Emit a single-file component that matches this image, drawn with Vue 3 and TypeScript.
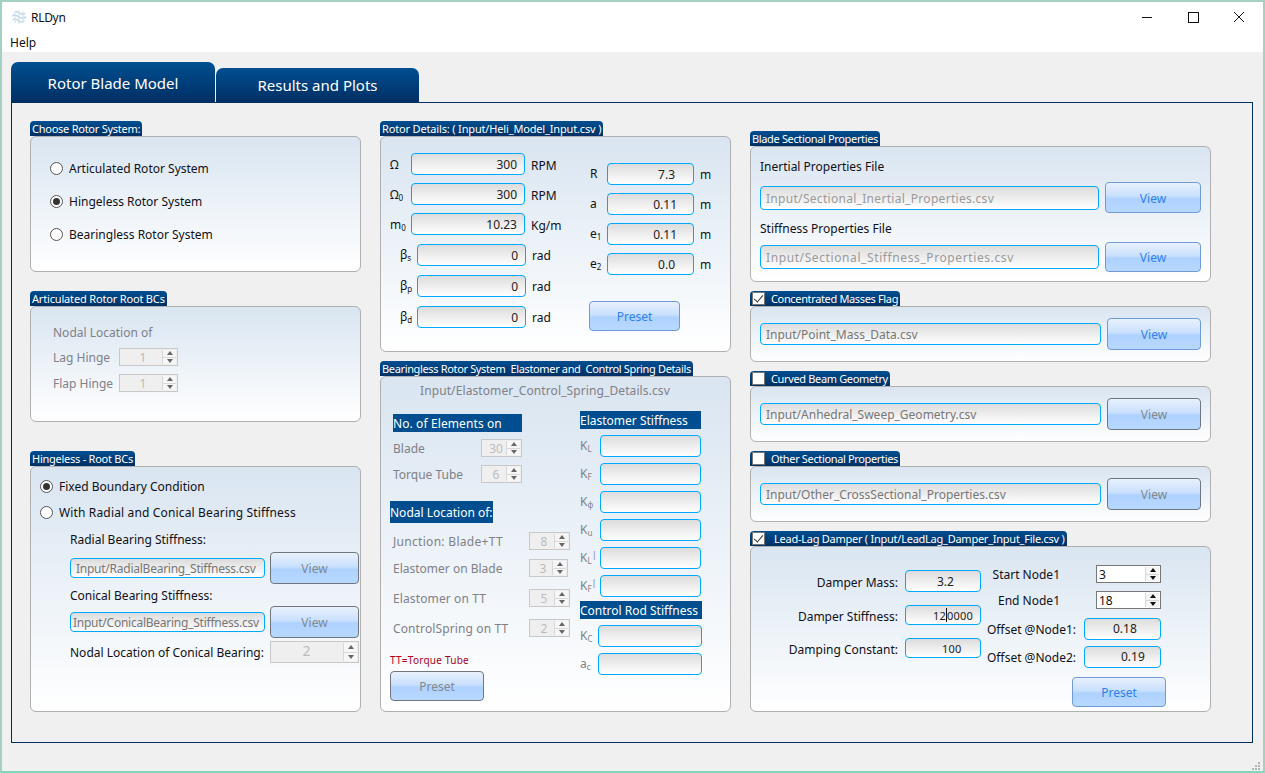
<script setup lang="ts">
const rotorSystems = ['Articulated Rotor System', 'Hingeless Rotor System', 'Bearingless Rotor System']
const rpmRows = [
  { label: 'Ω', sub: '', value: '300', unit: 'RPM' },
  { label: 'Ω', sub: '0', value: '300', unit: 'RPM' },
  { label: 'm', sub: '0', value: '10.23', unit: 'Kg/m' },
]
const betaRows = [
  { sub: 's', value: '0' },
  { sub: 'p', value: '0' },
  { sub: 'd', value: '0' },
]
const lengthRows = [
  { label: 'R', sub: '', value: '7.3', cls: 'pad-a' },
  { label: 'a', sub: '', value: '0.11', cls: 'pad-b' },
  { label: 'e', sub: '1', value: '0.11', cls: 'pad-b' },
  { label: 'e', sub: '2', value: '0.0', cls: 'pad-a' },
]
const nodalRows = [
  { label: 'Junction: Blade+TT', value: '8', cls: 'nodal-a' },
  { label: 'Elastomer on Blade', value: '3', cls: 'nodal-b' },
  { label: 'Elastomer on TT', value: '5', cls: 'nodal-c' },
  { label: 'ControlSpring on TT', value: '2', cls: 'nodal-c' },
]
const kRows = [
  { sub: 'L', sup: '' },
  { sub: 'F', sup: '' },
  { sub: 'ϕ', sup: '' },
  { sub: 'u', sup: '' },
  { sub: 'L', sup: '|' },
  { sub: 'F', sup: '|' },
]
</script>

<template>
  <div class="window">
    <header class="titlebar">
      <div class="title-left">
        <svg class="app-icon" viewBox="0 0 16 16" width="16" height="16">
          <defs>
            <clipPath id="globe"><circle cx="8" cy="8" r="7" /></clipPath>
          </defs>
          <g clip-path="url(#globe)" fill="none" stroke="#b5d0e8" stroke-width="1.3">
            <path d="M0 4c3-3 5-2 8 0s5 2 8-1M0 8c3-3 5-2 8 0s5 2 8-1M0 12c3-3 5-2 8 0s5 2 8-1" />
            <path d="M4 0c-1 5 1 10 0 16M8 0c1 5-1 10 0 16M12 0c-1 5 1 10 0 16" stroke="#d4e2ef" />
          </g>
        </svg>
        <span>RLDyn</span>
      </div>
      <div class="win-controls">
        <svg viewBox="0 0 46 30" width="46" height="30"><path d="M18 15.5h10" stroke="#111" fill="none" /></svg>
        <svg viewBox="0 0 46 30" width="46" height="30"><rect x="18.5" y="10.5" width="10" height="10" stroke="#111" fill="none" /></svg>
        <svg viewBox="0 0 46 30" width="46" height="30"><path d="M18 10l10 10M28 10l-10 10" stroke="#111" fill="none" /></svg>
      </div>
    </header>
    <nav class="menubar">Help</nav>

    <main class="content">
      <div class="tabs">
        <div class="tab active">Rotor Blade Model</div>
        <div class="tab">Results and Plots</div>
      </div>

      <div class="pane">
        <!-- left column -->
        <section class="col col-1">
          <div class="panel">
            <div class="tag">Choose Rotor System:</div>
            <div class="box h-136 rotor-choice">
              <label v-for="(r, i) in rotorSystems" :key="r" class="radio-row">
                <span class="radio" :class="{ on: i === 1 }"></span>{{ r }}
              </label>
            </div>
          </div>

          <div class="panel">
            <div class="tag loose">Articulated Rotor Root BCs</div>
            <div class="box h-116 artic">
              <div class="line dim nodal-title">Nodal Location of</div>
              <div class="artic-row">
                <span class="dim">Lag Hinge</span>
                <div class="spin disabled w-59"><span class="spin-val">1</span><span class="arrows"><i class="up"></i><i class="down"></i></span></div>
              </div>
              <div class="artic-row">
                <span class="dim">Flap Hinge</span>
                <div class="spin disabled w-59"><span class="spin-val">1</span><span class="arrows"><i class="up"></i><i class="down"></i></span></div>
              </div>
            </div>
          </div>

          <div class="panel low">
            <div class="tag">Hingeless - Root BCs</div>
            <div class="box h-246 hingeless">
              <label class="radio-row"><span class="radio on"></span>Fixed Boundary Condition</label>
              <label class="radio-row wide-text"><span class="radio"></span>With Radial and Conical Bearing Stiffness</label>
              <div class="indent">
                <div class="line bearing-label">Radial Bearing Stiffness:</div>
                <div class="file-row">
                  <div class="field file f-195 grey-text">Input/RadialBearing_Stiffness.csv</div>
                  <div class="btn disabled w-89">View</div>
                </div>
                <div class="line bearing-label second">Conical Bearing Stiffness:</div>
                <div class="file-row">
                  <div class="field file f-195 tight grey-text">Input/ConicalBearing_Stiffness.csv</div>
                  <div class="btn disabled w-89">View</div>
                </div>
                <div class="conical-row">
                  <span>Nodal Location of Conical Bearing:</span>
                  <div class="spin disabled w-89 tall"><span class="spin-val big">2</span><span class="arrows"><i class="up"></i><i class="down"></i></span></div>
                </div>
              </div>
            </div>
          </div>
        </section>

        <!-- middle column -->
        <section class="col col-2">
          <div class="panel">
            <div class="tag wide-tag">Rotor Details: ( Input/Heli_Model_Input.csv )</div>
            <div class="box h-216 details">
              <div class="details-left">
                <div v-for="r in rpmRows" :key="r.label + r.sub" class="detail-row rpm">
                  <span class="sym w-21">{{ r.label }}<sub>{{ r.sub }}</sub></span>
                  <div class="field value w-114">{{ r.value }}</div>
                  <span class="unit">{{ r.unit }}</span>
                </div>
                <div class="beta-list">
                  <div v-for="r in betaRows" :key="r.sub" class="detail-row">
                    <span class="sym beta">β<sub>{{ r.sub }}</sub></span>
                    <div class="field value w-109">{{ r.value }}</div>
                    <span class="unit">rad</span>
                  </div>
                </div>
              </div>
              <div class="details-right">
                <div v-for="r in lengthRows" :key="r.label + r.sub" class="detail-row">
                  <span class="sym w-17">{{ r.label }}<sub>{{ r.sub }}</sub></span>
                  <div class="field value w-87" :class="r.cls">{{ r.value }}</div>
                  <span class="unit">m</span>
                </div>
                <div class="btn preset-details">Preset</div>
              </div>
            </div>
          </div>

          <div class="panel">
            <div class="tag narrow-tag">Bearingless Rotor System&nbsp; Elastomer and&nbsp; Control Spring Details</div>
            <div class="box h-336 bearing">
              <div class="bearing-file dim">Input/Elastomer_Control_Spring_Details.csv</div>
              <div class="bearing-cols">
                <div class="bearing-left">
                  <div class="band band-el">No. of Elements on</div>
                  <div class="el-row"><span class="dim">Blade</span><div class="spin disabled w-41"><span class="spin-val">30</span><span class="arrows"><i class="up"></i><i class="down"></i></span></div></div>
                  <div class="el-row"><span class="dim">Torque Tube</span><div class="spin disabled w-41"><span class="spin-val">6</span><span class="arrows"><i class="up"></i><i class="down"></i></span></div></div>
                  <div class="band band-nodal">Nodal Location of:</div>
                  <div v-for="n in nodalRows" :key="n.label" class="nodal-row" :class="n.cls">
                    <span class="dim">{{ n.label }}</span>
                    <div class="spin disabled w-41"><span class="spin-val">{{ n.value }}</span><span class="arrows"><i class="up"></i><i class="down"></i></span></div>
                  </div>
                  <div class="tt-note">TT=Torque Tube</div>
                  <div class="btn disabled preset-bearing">Preset</div>
                </div>
                <div class="bearing-right">
                  <div class="band band-stiff">Elastomer Stiffness</div>
                  <div class="k-list">
                    <div v-for="(k, i) in kRows" :key="i" class="k-row">
                      <span class="sym dim k-sym">K<sub>{{ k.sub }}</sub><sup>{{ k.sup }}</sup></span>
                      <div class="field w-101"></div>
                    </div>
                  </div>
                  <div class="band band-rod">Control Rod Stiffness</div>
                  <div class="k-list rod">
                    <div class="k-row"><span class="sym dim k-sym narrow">K<sub>C</sub></span><div class="field w-104"></div></div>
                    <div class="k-row"><span class="sym dim k-sym narrow">a<sub>c</sub></span><div class="field w-104"></div></div>
                  </div>
                </div>
              </div>
            </div>
          </div>
        </section>

        <!-- right column -->
        <section class="col col-3">
          <div class="panel">
            <div class="tag narrow-tag">Blade Sectional Properties</div>
            <div class="box h-136 sectional">
              <div class="line sect-label">Inertial Properties File</div>
              <div class="sect-row">
                <div class="field file f-339 spaced faint">Input/Sectional_Inertial_Properties.csv</div>
                <div class="btn w-96 h-31">View</div>
              </div>
              <div class="line sect-label second">Stiffness Properties File</div>
              <div class="sect-row">
                <div class="field file f-339 wider faint">Input/Sectional_Stiffness_Properties.csv</div>
                <div class="btn w-96 h-30">View</div>
              </div>
            </div>
          </div>

          <div class="panel">
            <div class="tag narrow-tag"><span class="check on"></span>Concentrated Masses Flag</div>
            <div class="box h-56 single">
              <div class="field file f-341 grey-text">Input/Point_Mass_Data.csv</div>
              <div class="btn w-94">View</div>
            </div>
          </div>

          <div class="panel">
            <div class="tag narrow-tag"><span class="check"></span>Curved Beam Geometry</div>
            <div class="box h-56 single">
              <div class="field file f-341 grey-text">Input/Anhedral_Sweep_Geometry.csv</div>
              <div class="btn disabled w-94">View</div>
            </div>
          </div>

          <div class="panel">
            <div class="tag narrow-tag"><span class="check"></span>Other Sectional Properties</div>
            <div class="box h-56 single">
              <div class="field file f-341 grey-text">Input/Other_CrossSectional_Properties.csv</div>
              <div class="btn disabled w-94">View</div>
            </div>
          </div>

          <div class="panel">
            <div class="tag"><span class="check on wide"></span>Lead-Lag Damper ( Input/LeadLag_Damper_Input_File.csv )</div>
            <div class="box h-166 damper">
              <div class="damper-left">
                <div class="damper-row r1"><span>Damper Mass:</span><div class="field dark w-76 mass">3.2</div></div>
                <div class="damper-row r2"><span>Damper Stiffness:</span><div class="field dark small-text w-76 stiff"><span>12</span><i class="caret"></i><span>0000</span></div></div>
                <div class="damper-row r3"><span>Damping Constant:</span><div class="field dark small-text w-76 const">100</div></div>
              </div>
              <div class="damper-right">
                <div class="node-row n1"><span class="node-label">Start Node1</span><div class="spin w-65"><span class="spin-val dark">3</span><span class="arrows"><i class="up"></i><i class="down"></i></span></div></div>
                <div class="node-row n2"><span class="node-label">End Node1</span><div class="spin w-65"><span class="spin-val dark">18</span><span class="arrows"><i class="up"></i><i class="down"></i></span></div></div>
                <div class="offset-row o1"><span>Offset @Node1:</span><div class="field dark off w-77 off-a">0.18</div></div>
                <div class="offset-row o2"><span>Offset @Node2:</span><div class="field dark off w-77 off-b">0.19</div></div>
                <div class="btn preset-damper">Preset</div>
              </div>
            </div>
          </div>
        </section>
      </div>
    </main>

    <svg class="grip" viewBox="0 0 12 8" width="12" height="8">
      <g fill="#b4b4b4">
        <rect x="9" y="0" width="2" height="2" />
        <rect x="6" y="3" width="2" height="2" />
        <rect x="9" y="3" width="2" height="2" />
        <rect x="3" y="6" width="2" height="2" />
        <rect x="6" y="6" width="2" height="2" />
        <rect x="9" y="6" width="2" height="2" />
      </g>
    </svg>
  </div>
</template>

<style>
html,
body {
  margin: 0;
  background: #f0f0f0;
}
</style>

<style scoped>
.window {
  position: relative;
  width: 1265px;
  height: 773px;
  box-sizing: border-box;
  border: 2px solid #a3d2c2;
  border-bottom-color: #7fd6b8;
  background: #f0f0f0;
  font-family: "Noto Sans", "Open Sans", sans-serif;
  font-size: 12px;
  color: #101018;
  overflow: hidden;
  display: flex;
  flex-direction: column;
}

.titlebar {
  height: 30px;
  background: #fff;
  display: flex;
  align-items: center;
  justify-content: space-between;
  flex: none;
}

.title-left {
  display: flex;
  align-items: center;
  gap: 4px;
  padding-left: 9px;
  letter-spacing: -0.3px;
}

.win-controls {
  display: flex;
  margin-right: 1px;
}

.menubar {
  height: 20px;
  flex: none;
  background: #fff;
  padding-left: 8px;
  line-height: 22px;
}

.content {
  padding: 10px 10px 0 9px;
}

.tabs {
  display: flex;
  align-items: flex-end;
  gap: 1px;
  height: 40px;
}

.tab {
  width: 203px;
  height: 34px;
  box-sizing: border-box;
  border-radius: 7px 7px 0 0;
  background: linear-gradient(#004f91, #002f64);
  color: #fff;
  font-size: 15px;
  text-align: center;
  line-height: 35px;
}

.tab.active {
  width: 204px;
  height: 40px;
  line-height: 42px;
}

.pane {
  height: 641px;
  box-sizing: border-box;
  border: 1px solid #00305f;
  padding: 18px 0 0 18px;
  display: flex;
  gap: 19px;
}

.col {
  display: flex;
  flex-direction: column;
  flex: none;
}

.col-1 {
  width: 331px;
  gap: 19px;
}

.panel.low {
  margin-top: 10px;
}

.col-2 {
  width: 351px;
  gap: 9px;
}

.col-3 {
  width: 461px;
  gap: 9px;
  padding-top: 10px;
}

.tag {
  width: fit-content;
  height: 15px;
  line-height: 16px;
  padding: 0 2px;
  font-size: 11px;
  letter-spacing: -0.25px;
  color: #fff;
  white-space: nowrap;
  border-radius: 4px 4px 0 0;
  background: linear-gradient(#004f91, #002f64);
}

.tag.loose { letter-spacing: -0.17px; }
.tag.wide-tag { letter-spacing: -0.16px; }
.tag.narrow-tag { letter-spacing: -0.35px; }

.box {
  box-sizing: border-box;
  border: 1px solid #b0b0b0;
  border-radius: 6px;
  background: linear-gradient(#d9e5f1, #ffffff);
}

.h-136 { height: 136px; }
.h-116 { height: 116px; }
.h-246 { height: 246px; }
.h-216 { height: 216px; }
.h-336 { height: 336px; }
.h-56 { height: 56px; }
.h-166 { height: 166px; }

.line {
  line-height: 16px;
}

.dim {
  color: #808088;
}

.field {
  box-sizing: border-box;
  height: 22px;
  line-height: 22px;
  border: 1px solid #00a8ff;
  border-radius: 4px;
  background: linear-gradient(#dcdcdc, #ffffff);
  flex: none;
  white-space: nowrap;
  overflow: hidden;
}

.field.value {
  text-align: right;
  padding-right: 7px;
  color: #222;
}

.field.file {
  padding-left: 5px;
}

.grey-text { color: #777; }
.faint { color: #9a9a9a; }
.spaced { letter-spacing: 0.3px; }
.wider { letter-spacing: 0.6px; }
.tight { padding-left: 2px !important; }

.btn {
  box-sizing: border-box;
  flex: none;
  height: 32px;
  line-height: 32px;
  text-align: center;
  color: #2f80f0;
  border: 1px solid #6e9ad6;
  border-radius: 4px;
  background: linear-gradient(#e9f1fc 0%, #c9e0fd 45%, #aed2ff 55%, #b8d8ff 100%);
}

.btn.disabled {
  color: #808890;
  border-color: #70767e;
}

.spin {
  box-sizing: border-box;
  flex: none;
  height: 18px;
  border: 1px solid #c8c8c8;
  background: #efefef;
  display: flex;
  align-items: stretch;
  justify-content: space-between;
  line-height: 17px;
}

.spin:not(.disabled) {
  background: #fff;
  border-color: #777;
}

.spin-val {
  flex: 1;
  padding-left: 5px;
  color: #bcbcbc;
  text-align: center;
}

.spin-val.dark {
  color: #111;
  text-align: left;
  padding-left: 2px;
}

.spin-val.big {
  font-size: 14px;
  padding-left: 0;
}

.arrows {
  width: 13px;
  margin: 1px;
  flex: none;
  display: flex;
  flex-direction: column;
  border-left: 1px solid #d8d8d8;
  background: #f6f6f6;
}

.arrows i {
  flex: 1;
  position: relative;
}

.arrows i + i {
  border-top: 1px solid #d8d8d8;
}

.arrows i::after {
  content: "";
  position: absolute;
  left: 50%;
  top: 50%;
  margin: -2px 0 0 -3px;
  border: 3px solid transparent;
  border-top-width: 0;
  border-bottom: 4px solid #666;
}

.arrows i.down::after {
  border-bottom-width: 0;
  border-top: 4px solid #666;
}

.spin:not(.disabled) .arrows i::after {
  border-bottom-color: #111;
}

.spin:not(.disabled) .arrows i.down::after {
  border-top-color: #111;
}

.radio-row {
  display: flex;
  align-items: center;
  height: 20px;
}

.wide-text {
  letter-spacing: 0.15px;
}

.radio {
  box-sizing: border-box;
  width: 13px;
  height: 13px;
  margin-right: 6px;
  border-radius: 50%;
  border: 1px solid #555;
  background: #fff;
  flex: none;
  position: relative;
}

.radio.on::after {
  content: "";
  position: absolute;
  inset: 2px;
  border-radius: 50%;
  background: #333;
}

.rotor-choice {
  padding: 21px 0 0 19px;
  display: flex;
  flex-direction: column;
  gap: 13px;
}

.artic {
  padding: 18px 0 0 22px;
}

.artic-row {
  display: flex;
  align-items: center;
  height: 18px;
  margin-top: 8px;
}

.nodal-title + .artic-row {
  margin-top: 7px;
}

.artic-row > span {
  width: 66px;
}

.nodal-title {
  height: 16px;
}

.hingeless {
  padding: 9px 0 0 9px;
}

.hingeless .radio-row + .radio-row {
  margin-top: 6px;
}

.indent {
  padding-left: 30px;
}

.bearing-label {
  margin-top: 10px;
}

.bearing-label.second {
  margin-top: 4px;
}

.file-row {
  display: flex;
  align-items: center;
  gap: 5px;
  height: 32px;
}

.bearing-label + .file-row {
  margin-top: 4px;
}

.bearing-label.second + .file-row {
  margin-top: 2px;
}

.f-195 {
  width: 195px;
  height: 20px;
  line-height: 20px;
  letter-spacing: -0.25px;
}

.w-89 { width: 89px; }
.w-59 { width: 59px; }
.w-41 { width: 41px; }
.w-65 { width: 65px; }
.w-114 { width: 114px; }
.w-109 { width: 109px; }
.w-87 { width: 87px; }
.w-101 { width: 101px; }
.w-104 { width: 104px; }
.w-96 { width: 96px; }
.w-94 { width: 94px; }
.w-76 { width: 76px; }
.w-77 { width: 77px; }
.w-21 { width: 21px; }
.w-17 { width: 17px; }
.h-31 { height: 31px; line-height: 31px; }
.h-30 { height: 30px; line-height: 30px; }

.conical-row {
  display: flex;
  align-items: center;
  justify-content: space-between;
  margin-top: 3px;
  width: 289px;
}

.spin.tall {
  height: 22px;
}

.details {
  padding: 16px 0 0 9px;
  display: flex;
}

.details-left {
  width: 200px;
  flex: none;
}

.detail-row {
  display: flex;
  align-items: center;
  height: 22px;
  gap: 6px;
}

.sym {
  flex: none;
  line-height: 16px;
}

.detail-row .sym {
  margin-right: -6px;
}

.detail-row.rpm .sym,
.detail-row.rpm .unit {
  margin-top: 2px;
}

.sym sub {
  font-size: 8px;
  vertical-align: -2px;
  line-height: 0;
}

.sym sup {
  font-size: 9px;
  vertical-align: 4px;
  line-height: 0;
}

.details-left > .detail-row + .detail-row {
  margin-top: 8px;
}

.beta-list {
  margin-top: 9px;
  display: flex;
  flex-direction: column;
  gap: 9px;
}

.sym.beta {
  width: 27px;
  padding-left: 10px;
  box-sizing: border-box;
}

.details-right {
  margin-top: 10px;
  display: flex;
  flex-direction: column;
  gap: 8px;
}

.details-right .detail-row {
  gap: 6px;
}

.pad-a {
  padding-right: 18px !important;
}

.pad-b {
  padding-right: 16px !important;
}

.preset-details {
  width: 91px;
  height: 30px;
  line-height: 30px;
  margin: 18px 0 0 -1px;
}

.bearing-file {
  height: 14px;
  line-height: 14px;
  padding-left: 39px;
  margin-top: 7px;
  letter-spacing: 0.1px;
}

.bearing-cols {
  display: flex;
  padding-left: 9px;
}

.bearing-left {
  width: 190px;
  flex: none;
}

.band {
  background: #004e8f;
  color: #fff;
  white-space: nowrap;
  flex: none;
}

.band-el {
  width: 129px;
  height: 18px;
  line-height: 20px;
  margin: 16px 0 0 3px;
  letter-spacing: 0.1px;
}

.band-nodal {
  width: 103px;
  height: 22px;
  line-height: 24px;
  margin-top: 18px;
}

.band-stiff {
  width: 121px;
  height: 18px;
  line-height: 20px;
  margin-top: 13px;
}

.band-rod {
  width: 122px;
  height: 18px;
  line-height: 20px;
  margin-top: 4px;
}

.el-row {
  display: flex;
  justify-content: space-between;
  align-items: center;
  width: 129px;
  height: 18px;
  margin-left: 3px;
  margin-top: 8px;
}

.el-row:nth-child(2) {
  margin-top: 7px;
}

.nodal-row {
  display: flex;
  justify-content: space-between;
  align-items: center;
  width: 177px;
  height: 18px;
  margin-left: 3px;
}

.nodal-a { margin-top: 9px; letter-spacing: 0.3px; }
.nodal-a .spin { letter-spacing: 0; }
.nodal-b { margin-top: 9px; width: 175px; }
.nodal-c { margin-top: 12px; width: 177px; letter-spacing: 0.12px; }
.nodal-b .spin { width: 39px; }

.tt-note {
  color: #a8001e;
  font-size: 10px;
  letter-spacing: 0.25px;
  line-height: 14px;
  margin-top: 16px;
}

.preset-bearing {
  width: 94px;
  height: 30px;
  line-height: 30px;
  margin-top: 4px;
}

.k-list {
  display: flex;
  flex-direction: column;
  gap: 6px;
  margin-top: 6px;
}

.k-row {
  display: flex;
  align-items: center;
  height: 22px;
}

.k-sym {
  width: 20px;
}

.k-sym.narrow {
  width: 18px;
}

.sectional {
  padding: 12px 0 0 9px;
}

.sect-label.second {
  margin-top: 8px;
}

.sect-row {
  display: flex;
  align-items: center;
  gap: 6px;
  height: 31px;
  margin-top: 7px;
}

.sect-label.second + .sect-row {
  margin-top: 4px;
}

.f-339 {
  width: 339px;
  height: 24px;
  line-height: 24px;
}

.f-341 {
  width: 341px;
}

.single {
  display: flex;
  align-items: center;
  gap: 6px;
  padding-left: 9px;
}

.check {
  display: inline-block;
  box-sizing: border-box;
  width: 13px;
  height: 13px;
  margin-right: 6px;
  vertical-align: -2px;
  background: #fff;
  border: 1px solid #777;
  position: relative;
}

.check.wide {
  margin-right: 9px;
}

.check.on::after {
  content: "";
  position: absolute;
  left: 3px;
  top: 0;
  width: 4px;
  height: 8px;
  border: solid #333;
  border-width: 0 1.5px 1.5px 0;
  transform: rotate(40deg);
}

.damper {
  display: flex;
}

.damper-left {
  width: 230px;
  flex: none;
  padding-top: 23px;
}

.damper-row {
  display: flex;
  align-items: center;
  justify-content: flex-end;
  gap: 7px;
}

.damper-row > span {
  margin-top: 2px;
}

.r2 { margin-top: 13px; }
.r3 { margin-top: 13px; }

.field.dark {
  color: #222;
}

.field.off {
  line-height: 20px;
}

.small-text {
  height: 20px !important;
  line-height: 19px !important;
  font-size: 11px;
  letter-spacing: 0.2px;
}

.mass { padding-left: 31px; }
.stiff { padding-left: 27px; display: flex; }
.const { padding-left: 36px; }
.off-a { padding-left: 28px; }
.off-b { padding-left: 36px; }

.caret {
  width: 1px;
  height: 14px;
  margin-top: 2px;
  background: #111;
  flex: none;
}

.damper-right {
  padding: 18px 0 0 6px;
}

.node-row {
  display: flex;
  align-items: center;
  width: 174px;
  height: 18px;
}

.node-label {
  width: 73px;
  text-align: right;
  margin-right: 36px;
  flex: none;
}

.n2 { margin-top: 8px; }

.offset-row {
  display: flex;
  align-items: center;
  justify-content: space-between;
  width: 174px;
}

.o1 { margin-top: 9px; }
.o2 { margin-top: 6px; }

.preset-damper {
  width: 94px;
  height: 30px;
  line-height: 30px;
  margin: 9px 0 0 85px;
}

.grip {
  position: absolute;
  right: 2px;
  bottom: 1px;
}
</style>
